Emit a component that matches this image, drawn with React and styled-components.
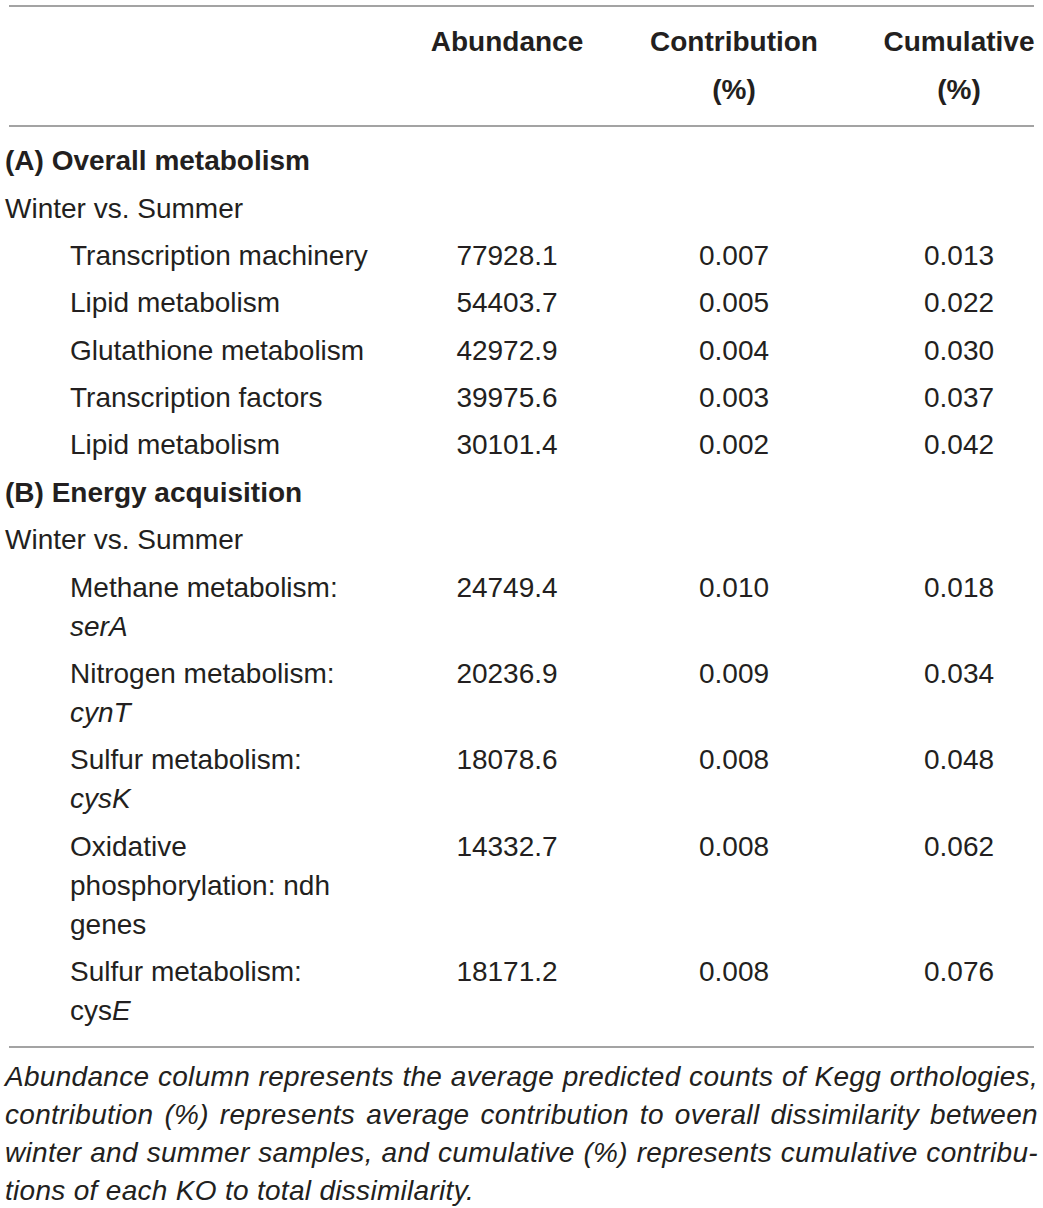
import React from 'react';
import styled, { createGlobalStyle } from 'styled-components';

const GlobalStyle = createGlobalStyle`
  body {
    margin: 0;
    background: #fff;
    color: #231f20;
    font-family: "Liberation Sans", Arial, sans-serif;
  }
`;

const Page = styled.div`
  width: 1033px;
  padding: 5px 5px 0 5px;
`;

const Rule = styled.div`
  height: 2px;
  margin: 0 4px;
  background: #a3a3a3;
`;

const Head = styled.div`
  display: grid;
  grid-template-columns: 421px 162px 292px 158px;
  padding: 11px 0;
  font-size: 28px;
  font-weight: 700;
  line-height: 48px;
`;

const HeadCell = styled.div`
  text-align: center;
  white-space: nowrap;
`;

const Body = styled.div`
  padding: 10px 0 12px;
`;

const Row = styled.div`
  display: grid;
  grid-template-columns: 421px 162px 292px 158px;
  padding: 4.2px 0;
  font-size: 28px;
  line-height: 39px;
`;

const Label = styled.div`
  padding-left: ${(p) => (p.$indent ? '65px' : '0')};
  font-weight: ${(p) => (p.$bold ? 700 : 400)};
  white-space: nowrap;
`;

const Num = styled.div`
  text-align: center;
`;

const Gene = styled.i`
  font-style: italic;
`;

const Note = styled.div`
  padding-top: 10px;
  font-size: 28px;
  letter-spacing: 0.3px;
  font-style: italic;
  line-height: 38px;
`;

const NoteLine = styled.div`
  white-space: nowrap;
  text-align: ${(p) => (p.$last ? 'left' : 'justify')};
  text-align-last: ${(p) => (p.$last ? 'left' : 'justify')};
`;

const groups = [
  {
    title: '(A) Overall metabolism',
    rows: [
      { name: ['Transcription machinery'], abundance: '77928.1', contrib: '0.007', cumul: '0.013' },
      { name: ['Lipid metabolism'], abundance: '54403.7', contrib: '0.005', cumul: '0.022' },
      { name: ['Glutathione metabolism'], abundance: '42972.9', contrib: '0.004', cumul: '0.030' },
      { name: ['Transcription factors'], abundance: '39975.6', contrib: '0.003', cumul: '0.037' },
      { name: ['Lipid metabolism'], abundance: '30101.4', contrib: '0.002', cumul: '0.042' },
    ],
  },
  {
    title: '(B) Energy acquisition',
    rows: [
      { name: ['Methane metabolism:', <Gene>serA</Gene>], abundance: '24749.4', contrib: '0.010', cumul: '0.018' },
      { name: ['Nitrogen metabolism:', <Gene>cynT</Gene>], abundance: '20236.9', contrib: '0.009', cumul: '0.034' },
      { name: ['Sulfur metabolism:', <Gene>cysK</Gene>], abundance: '18078.6', contrib: '0.008', cumul: '0.048' },
      { name: ['Oxidative', 'phosphorylation: ndh', 'genes'], abundance: '14332.7', contrib: '0.008', cumul: '0.062' },
      { name: ['Sulfur metabolism:', <>cys<Gene>E</Gene></>], abundance: '18171.2', contrib: '0.008', cumul: '0.076' },
    ],
  },
];

const noteLines = [
  'Abundance column represents the average predicted counts of Kegg orthologies,',
  'contribution (%) represents average contribution to overall dissimilarity between',
  'winter and summer samples, and cumulative (%) represents cumulative contribu-',
  'tions of each KO to total dissimilarity.',
];

function App() {
  return (
    <Page>
      <GlobalStyle />
      <Rule />
      <Head>
        <HeadCell />
        <HeadCell>Abundance</HeadCell>
        <HeadCell>Contribution<br />(%)</HeadCell>
        <HeadCell>Cumulative<br />(%)</HeadCell>
      </Head>
      <Rule />
      <Body>
        {groups.map((g) => (
          <React.Fragment key={g.title}>
            <Row><Label $bold>{g.title}</Label></Row>
            <Row><Label>Winter vs. Summer</Label></Row>
            {g.rows.map((r, i) => (
              <Row key={i}>
                <Label $indent>
                  {r.name.map((line, j) => (
                    <div key={j}>{line}</div>
                  ))}
                </Label>
                <Num>{r.abundance}</Num>
                <Num>{r.contrib}</Num>
                <Num>{r.cumul}</Num>
              </Row>
            ))}
          </React.Fragment>
        ))}
      </Body>
      <Rule />
      <Note>
        {noteLines.map((t, i) => (
          <NoteLine key={i} $last={i === noteLines.length - 1}>{t}</NoteLine>
        ))}
      </Note>
    </Page>
  );
}

export default App;
